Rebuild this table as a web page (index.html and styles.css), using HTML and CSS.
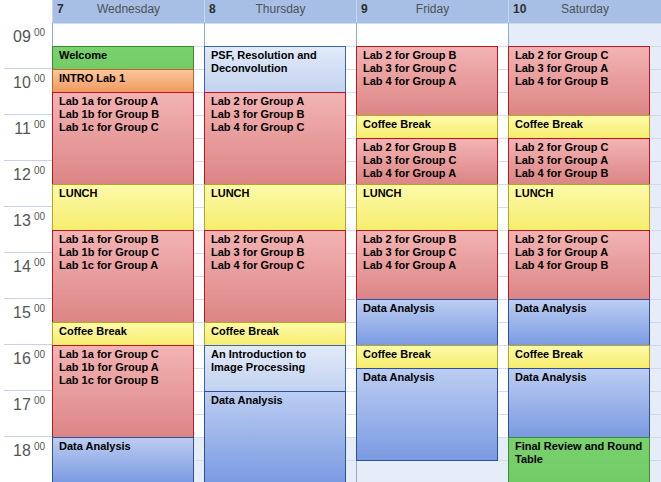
FILE: index.html
```html
<!DOCTYPE html>
<html>
<head>
<meta charset="utf-8">
<link rel="stylesheet" href="styles.css">
</head>
<body>
<div class="cal">
  <div class="corner"></div>
  <div class="hd"><span class="num">7</span><span class="name">Wednesday</span></div>
  <div class="hd"><span class="num">8</span><span class="name">Thursday</span></div>
  <div class="hd"><span class="num">9</span><span class="name">Friday</span></div>
  <div class="hd last"><span class="num">10</span><span class="name">Saturday</span></div>

  <div class="times">
    <div class="hour"><span class="h">09</span><span class="m">00</span></div>
    <div class="hour"><span class="h">10</span><span class="m">00</span></div>
    <div class="hour"><span class="h">11</span><span class="m">00</span></div>
    <div class="hour"><span class="h">12</span><span class="m">00</span></div>
    <div class="hour"><span class="h">13</span><span class="m">00</span></div>
    <div class="hour"><span class="h">14</span><span class="m">00</span></div>
    <div class="hour"><span class="h">15</span><span class="m">00</span></div>
    <div class="hour"><span class="h">16</span><span class="m">00</span></div>
    <div class="hour"><span class="h">17</span><span class="m">00</span></div>
    <div class="hour"><span class="h">18</span><span class="m">00</span></div>
  </div>

  <div class="day">
    <div class="gap"></div>
    <div class="ev grn s1">Welcome</div>
    <div class="ev org s1">INTRO Lab 1</div>
    <div class="ev red s4">Lab 1a for Group A<br>Lab 1b for Group B<br>Lab 1c for Group C</div>
    <div class="ev yel s2">LUNCH</div>
    <div class="ev red s4">Lab 1a for Group B<br>Lab 1b for Group C<br>Lab 1c for Group A</div>
    <div class="ev yel s1">Coffee Break</div>
    <div class="ev red s4">Lab 1a for Group C<br>Lab 1b for Group A<br>Lab 1c for Group B</div>
    <div class="ev blu s2">Data Analysis</div>
  </div>

  <div class="day">
    <div class="gap"></div>
    <div class="ev lbl s2">PSF, Resolution and Deconvolution</div>
    <div class="ev red s4">Lab 2 for Group A<br>Lab 3 for Group B<br>Lab 4 for Group C</div>
    <div class="ev yel s2">LUNCH</div>
    <div class="ev red s4">Lab 2 for Group A<br>Lab 3 for Group B<br>Lab 4 for Group C</div>
    <div class="ev yel s1">Coffee Break</div>
    <div class="ev lbl s2">An Introduction to Image Processing</div>
    <div class="ev blu s4">Data Analysis</div>
  </div>

  <div class="day">
    <div class="gap"></div>
    <div class="ev red s3">Lab 2 for Group B<br>Lab 3 for Group C<br>Lab 4 for Group A</div>
    <div class="ev yel s1">Coffee Break</div>
    <div class="ev red s2">Lab 2 for Group B<br>Lab 3 for Group C<br>Lab 4 for Group A</div>
    <div class="ev yel s2">LUNCH</div>
    <div class="ev red s3">Lab 2 for Group B<br>Lab 3 for Group C<br>Lab 4 for Group A</div>
    <div class="ev blu s2">Data Analysis</div>
    <div class="ev yel s1">Coffee Break</div>
    <div class="ev blu s4">Data Analysis</div>
  </div>

  <div class="day weekend">
    <div class="gap"></div>
    <div class="ev red s3">Lab 2 for Group C<br>Lab 3 for Group A<br>Lab 4 for Group B</div>
    <div class="ev yel s1">Coffee Break</div>
    <div class="ev red s2">Lab 2 for Group C<br>Lab 3 for Group A<br>Lab 4 for Group B</div>
    <div class="ev yel s2">LUNCH</div>
    <div class="ev red s3">Lab 2 for Group C<br>Lab 3 for Group A<br>Lab 4 for Group B</div>
    <div class="ev blu s2">Data Analysis</div>
    <div class="ev yel s1">Coffee Break</div>
    <div class="ev blu s3">Data Analysis</div>
    <div class="ev grn s2">Final Review and Round Table</div>
  </div>
</div>
</body>
</html>
```

FILE: styles.css
```css
html, body {
  margin: 0;
  padding: 0;
  width: 661px;
  height: 482px;
  overflow: hidden;
  background: #fff;
  font-family: "Liberation Sans", Arial, sans-serif;
}

.cal {
  display: grid;
  grid-template-columns: 52px 152px 152px 152px 153px;
  grid-template-rows: 23px 459px;
  overflow: hidden;
}

.corner {
  background: #fff;
}

.hd {
  display: grid;
  grid-template-columns: 1fr auto 1fr;
  align-items: start;
  background: #a7bfe4;
  border-left: 1px solid #c7d6ee;
  height: 23px;
  line-height: 19px;
  box-sizing: border-box;
}

.hd:first-of-type {
  border-left-color: #8eaadb;
}

.num {
  padding-left: 4px;
  font-weight: bold;
  font-size: 12px;
  color: #2e2e2e;
}

.name {
  font-size: 12px;
  color: #4f5258;
}

.times {
  display: flex;
  flex-direction: column;
  background: #fff;
}

.hour {
  height: 46px;
  flex: none;
  box-sizing: border-box;
  margin-left: 4px;
  border-bottom: 1px solid #c9d3e3;
  display: flex;
  justify-content: flex-end;
  align-items: flex-start;
  padding: 6px 7px 0 0;
  color: #555;
}

.h {
  font-size: 16px;
  line-height: 16px;
}

.m {
  font-size: 10px;
  line-height: 10px;
  margin-top: -1px;
  margin-left: 3px;
}

.day {
  display: flex;
  flex-direction: column;
  overflow: hidden;
  background-color: #e6edf8;
  background-image:
    linear-gradient(to right, #8eaadb 0, #8eaadb 1px, transparent 1px),
    repeating-linear-gradient(to bottom, #d2ddf0 0, #d2ddf0 1px, transparent 1px, transparent 23px),
    linear-gradient(to bottom, #fff 0, #fff 414px, #e6edf8 414px);
}

.day.weekend {
  background-image:
    linear-gradient(to right, #8eaadb 0, #8eaadb 1px, transparent 1px),
    repeating-linear-gradient(to bottom, #cbd8ee 0, #cbd8ee 1px, transparent 1px, transparent 23px);
}

.gap {
  height: 23px;
  flex: none;
}

.ev {
  flex: none;
  width: 142px;
  box-sizing: border-box;
  margin-bottom: -1px;
  border: 1px solid;
  padding: 2px 4px 0 6px;
  font-size: 11px;
  line-height: 13px;
  font-weight: bold;
  color: #000;
  overflow: hidden;
  position: relative;
}

.s1 { height: 24px; }
.s2 { height: 47px; }
.s3 { height: 70px; }
.s4 { height: 93px; }

.red {
  border-color: #c11320;
  background: linear-gradient(to bottom, #f3b3b3, #dc8585);
}

.yel {
  border-color: #b3a722;
  background: linear-gradient(to bottom, #fdfaa9, #f6ed6e);
}

.blu {
  border-color: #2d4f9d;
  background: linear-gradient(to bottom, #bccdf1, #7a9ae2);
}

.lbl {
  border-color: #3e62ae;
  background: linear-gradient(to bottom, #e1eaf8, #c2d2ef);
}

.grn {
  border-color: #3b8a34;
  background: linear-gradient(to bottom, #7ad16e, #72cc66);
}

.org {
  border-color: #c4602a;
  background: linear-gradient(to bottom, #fbc69c, #f09b5f);
}
```
